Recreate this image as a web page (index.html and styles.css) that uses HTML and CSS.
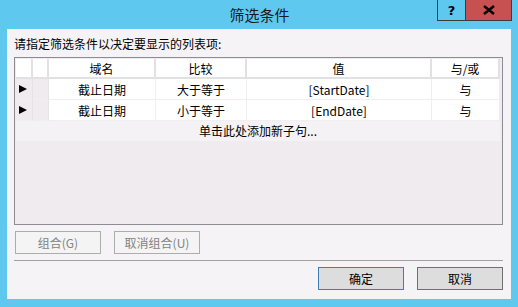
FILE: index.html
```html
<!DOCTYPE html>
<html lang="zh-CN">
<head>
<meta charset="utf-8">
<title>筛选条件</title>
<link rel="stylesheet" href="styles.css">
</head>
<body>
<div class="window">
  <div class="titlebar">
    <div class="title">筛选条件</div>
    <div class="caption-btns">
      <div class="cap help">?</div>
      <div class="cap close">
        <svg width="12" height="10" viewBox="0 0 12 10"><path d="M1 1 L11 9 M11 1 L1 9" stroke="#000" stroke-width="2.4"/></svg>
      </div>
    </div>
  </div>
  <div class="client">
    <div class="prompt">请指定筛选条件以决定要显示的列表项:</div>
    <div class="grid">
      <div class="row head">
        <div class="cell c1"></div>
        <div class="cell c2"></div>
        <div class="cell c3">域名</div>
        <div class="cell c4">比较</div>
        <div class="cell c5">值</div>
        <div class="cell c6">与/或</div>
      </div>
      <div class="row data">
        <div class="cell c1 rh"><span class="arrow"></span></div>
        <div class="cell c2 rh"></div>
        <div class="cell c3">截止日期</div>
        <div class="cell c4">大于等于</div>
        <div class="cell c5">[StartDate]</div>
        <div class="cell c6">与</div>
      </div>
      <div class="row data">
        <div class="cell c1 rh"><span class="arrow"></span></div>
        <div class="cell c2 rh"></div>
        <div class="cell c3">截止日期</div>
        <div class="cell c4">小于等于</div>
        <div class="cell c5">[EndDate]</div>
        <div class="cell c6">与</div>
      </div>
      <div class="addrow">单击此处添加新子句...</div>
    </div>
    <div class="group-btns">
      <div class="btn disabled">组合(G)</div>
      <div class="btn disabled">取消组合(U)</div>
    </div>
    <div class="sep"></div>
    <div class="footer">
      <div class="btn default">确定</div>
      <div class="btn">取消</div>
    </div>
  </div>
</div>
</body>
</html>
```
FILE: styles.css
```css
html, body {
  margin: 0;
  padding: 0;
}
body {
  width: 518px;
  height: 307px;
  overflow: hidden;
  background: #5fc8ef;
  font-family: "Microsoft YaHei", "Noto Sans CJK SC", "Noto Sans", sans-serif;
  font-size: 12px;
  color: #000;
}
.window {
  width: 518px;
  height: 307px;
  background: #5fc8ef;
}
.titlebar {
  height: 29px;
  display: flex;
  position: relative;
}
.title {
  flex: 1;
  text-align: center;
  font-size: 15px;
  line-height: 30px;
  color: #1a1a1a;
  padding-left: 1px;
}
.caption-btns {
  position: absolute;
  top: 0;
  right: 6px;
  display: flex;
}
.cap {
  height: 20px;
  border: 1px solid #3c3c3c;
  border-top: none;
  display: flex;
  align-items: center;
  justify-content: center;
}
.help {
  width: 27px;
  border-right: none;
  font-family: "DejaVu Sans", sans-serif;
  font-weight: bold;
  font-size: 13px;
}
.close {
  width: 45px;
  background: #c75050;
}
.client {
  margin: 0 7px;
  height: 270px;
  background: #f6f3f7;
  padding: 0 7px;
  box-sizing: border-box;
  display: flex;
  flex-direction: column;
}
.prompt {
  height: 28px;
  line-height: 30px;
  padding-top: 0;
}
.grid {
  width: 489px;
  height: 168px;
  box-sizing: border-box;
  border: 1px solid #8c8c93;
  background: #efebef;
  padding: 1px 0 0 1px;
}
.row {
  display: flex;
}
.cell {
  box-sizing: border-box;
  background: #fff;
  text-align: center;
  border-right: 1px solid #ebe8eb;
  border-bottom: 1px solid #ebe8eb;
  display: flex;
  align-items: center;
  justify-content: center;
}
.head .cell {
  height: 20px;
  border-right: 2px solid #e3e0e3;
  border-bottom: 2px solid #e3e0e3;
  padding-top: 1px;
}
.data .cell {
  height: 21px;
  border-right: 1px solid #f0eef0;
  border-bottom: 1px solid #f0eef0;
}
.c1 { width: 17px; }
.c2 { width: 16px; }
.c3 { width: 107px; }
.c4 { width: 91px; }
.c5 { width: 185px; }
.c6 { width: 68px; }
.data .rh {
  background: #efebef;
  border-right: 1px solid #e6e3e6;
}
.data .c1 {
  justify-content: flex-start;
  padding-left: 3px;
}
.arrow {
  width: 0;
  height: 0;
  border-top: 4px solid transparent;
  border-bottom: 4px solid transparent;
  border-left: 8px solid #000;
}
.addrow {
  height: 20px;
  background: #f5f2f5;
  text-align: center;
  line-height: 20px;
  margin-right: 2px;
}
.btn {
  width: 86px;
  height: 23px;
  box-sizing: border-box;
  border: 1px solid #707070;
  background: #dddddd;
  display: flex;
  align-items: center;
  justify-content: center;
}
.btn.disabled {
  border-color: #adadad;
  background: #f4f4f4;
  color: #838383;
}
.btn.default {
  border-color: #3c7fb1;
}
.group-btns {
  display: flex;
  gap: 13px;
  margin-top: 6px;
  padding-left: 1px;
}
.sep {
  width: 489px;
  height: 1px;
  background: #a0a0a0;
  margin-top: 6px;
}
.footer {
  display: flex;
  justify-content: flex-end;
  gap: 13px;
  margin-top: 6px;
  width: 489px;
}
```
